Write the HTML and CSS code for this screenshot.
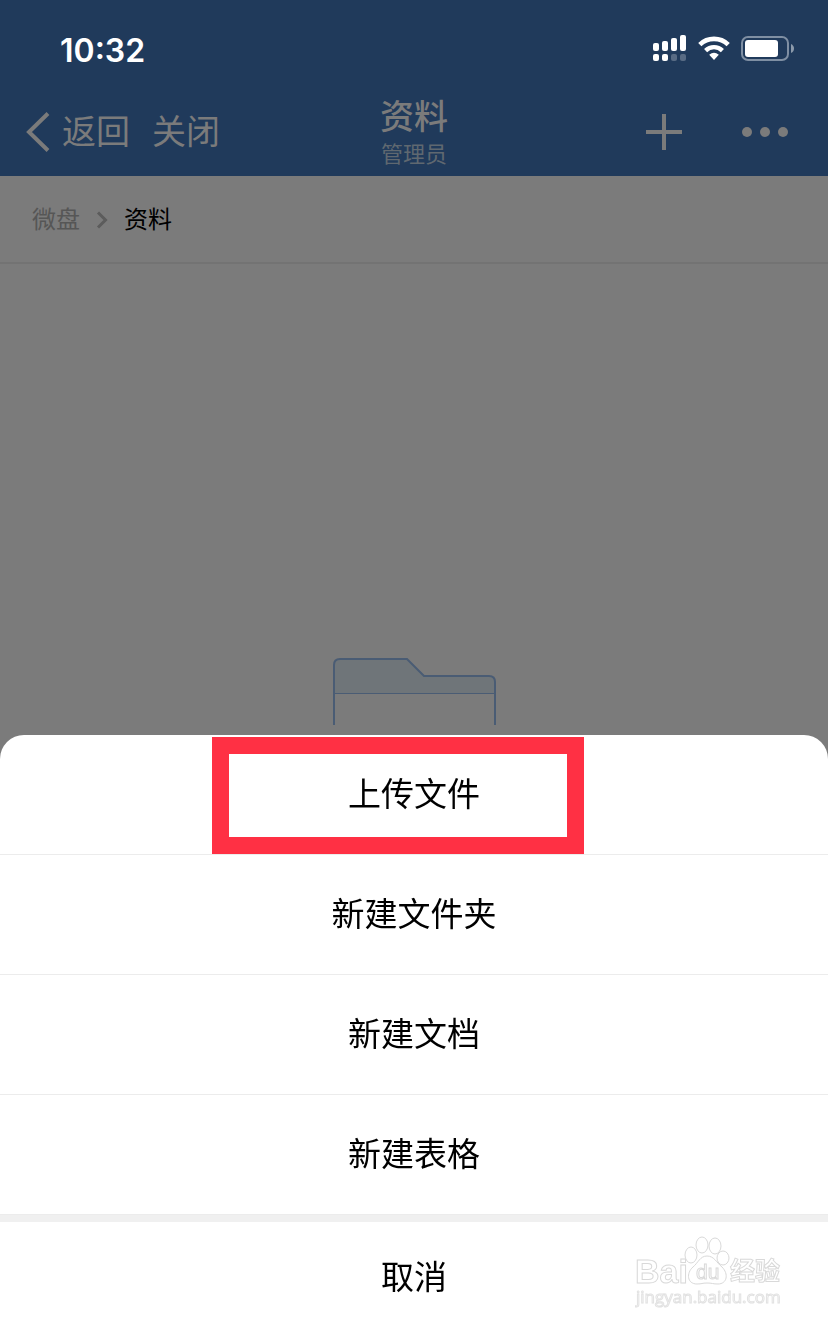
FILE: index.html
```html
<!DOCTYPE html>
<html lang="zh-CN">
  <head>
    <meta charset="utf-8">
    <meta name="viewport" content="width=device-width, initial-scale=1.0">
    <title>资料</title>
    <link rel="stylesheet" href="styles.css">
  </head>
  <body>
    <header class="header">
      <div class="status-bar">
        <span class="time">10:32</span>
        <div class="status-icons">
          <svg width="34" height="27" viewBox="0 0 34 27" fill="#fff">
            <rect x="0" y="8" width="6" height="8" rx="2"/>
            <rect x="9" y="6" width="6" height="10" rx="2"/>
            <rect x="18" y="3" width="6" height="13" rx="2"/>
            <rect x="27" y="0" width="6" height="16" rx="2"/>
            <rect x="0" y="19" width="6" height="7" rx="2"/>
            <rect x="9" y="19" width="6" height="7" rx="2"/>
            <rect x="18" y="19" width="6" height="7" rx="2" opacity="0.25"/>
            <rect x="27" y="19" width="6" height="7" rx="2" opacity="0.25"/>
          </svg>
          <svg width="32" height="24" viewBox="0 0 32 24">
            <path d="M1.8 8.6a20.4 20.4 0 0 1 28.4 0" fill="none" stroke="#fff" stroke-width="4.6"/>
            <path d="M7.6 14.6a12 12 0 0 1 16.8 0" fill="none" stroke="#fff" stroke-width="4.4"/>
            <path d="M11.2 18.7Q16 15 20.8 18.7L16 24Z" fill="#fff"/>
          </svg>
          <svg width="53" height="25" viewBox="0 0 53 25">
            <rect x="1" y="1" width="46" height="23" rx="6" fill="none" stroke="#7f8fa3" stroke-width="2"/>
            <rect x="4" y="4" width="33" height="17" rx="3" fill="#fff"/>
            <path d="M50 8q3 1.500 3 4.500t-3 4.500z" fill="#8c9aab"/>
          </svg>
        </div>
      </div>
      <nav class="nav-bar">
        <div class="nav-left">
          <button class="nav-button back-button">
            <svg width="24" height="40" viewBox="0 0 24 40" fill="none" stroke="#7b7b7b" stroke-width="4">
              <path d="M22 1.500 3 20l19 18.500"/>
            </svg>
            返回
          </button>
          <button class="nav-button">关闭</button>
        </div>
        <div class="nav-title">
          <h1>资料</h1>
          <p>管理员</p>
        </div>
        <div class="nav-right">
          <button class="nav-button" aria-label="添加">
            <svg width="36" height="36" viewBox="0 0 36 36" fill="#7b7b7b">
              <path d="M16 0h4v16h16v4H20v16h-4V20H0v-4h16z"/>
            </svg>
          </button>
          <button class="nav-button" aria-label="更多">
            <svg width="46" height="10" viewBox="0 0 46 10" fill="#7b7b7b">
              <circle cx="5" cy="5" r="5"/>
              <circle cx="23" cy="5" r="5"/>
              <circle cx="41" cy="5" r="5"/>
            </svg>
          </button>
        </div>
      </nav>
    </header>

    <div class="breadcrumb">
      <a href="#">微盘</a>
      <svg width="12" height="18" viewBox="0 0 12 18" fill="none" stroke="#5c5c5c" stroke-width="3">
        <path d="M2 1.500 9.500 9 2 16.500"/>
      </svg>
      <span>资料</span>
    </div>

    <main class="empty">
      <svg width="163" height="67" viewBox="0 0 163 67" fill="none" stroke="#4a5c74">
        <path d="M1 35V7q0-6 6-6h67l17 17h65q6 0 6 6v11z" fill="#6f7579" stroke="none"/>
        <path d="M1 35.500h161"/>
        <path d="M1 67V7q0-6 6-6h67l17 17h65q6 0 6 6v43" stroke-width="2"/>
      </svg>
    </main>

    <div class="sheet">
      <button class="sheet-item">上传文件<span class="highlight"></span></button>
      <button class="sheet-item">新建文件夹</button>
      <button class="sheet-item">新建文档</button>
      <button class="sheet-item">新建表格</button>
      <button class="sheet-item cancel">取消</button>
      <svg class="watermark" width="150" height="74" viewBox="0 0 150 74" fill="#fff" stroke="#d9d9d9">
        <text class="mark-name" x="0" y="47">Bai</text>
        <ellipse cx="56" cy="19" rx="6" ry="8"/>
        <ellipse cx="67" cy="9" rx="6" ry="8"/>
        <ellipse cx="80" cy="10" rx="6" ry="8"/>
        <ellipse cx="88" cy="22" rx="6" ry="7"/>
        <path d="M72 20c-7 0-9 7-14 11-7 6-6 17 4 17 5 0 5-1 10-1s6 1 11 1c9 0 11-10 4-17-6-5-8-11-15-11z"/>
        <text class="mark-du" x="61" y="43">du</text>
        <text class="mark-cn" x="95" y="44">经验</text>
        <text class="mark-url" x="1" y="67">jingyan.baidu.com</text>
      </svg>
    </div>
  </body>
</html>
```

FILE: styles.css
```css
* {
  box-sizing: border-box;
}

body {
  margin: 0;
  min-height: 100vh;
  background-color: #7b7b7b;
  color: #000;
  font-family: "Liberation Sans", "Noto Sans CJK SC", sans-serif;
}

h1, p {
  margin: 0;
}

svg {
  display: block;
}

button {
  margin: 0;
  padding: 0;
  border: 0;
  background: none;
  font-family: inherit;
  cursor: pointer;
}

.header {
  background-color: #203a5b;
  color: #7b7b7b;
}

.status-bar {
  display: flex;
  justify-content: space-between;
  align-items: center;
  height: 88px;
  padding: 12px 34px 0 60px;
}

.time {
  color: #fff;
  font-family: Inter, sans-serif;
  font-size: 32px;
  font-weight: 600;
}

.status-icons {
  display: flex;
  align-items: center;
  gap: 11px;
  padding-bottom: 4px;
}

.nav-bar {
  display: grid;
  grid-template-columns: 1fr auto 1fr;
  align-items: center;
  height: 88px;
}

.nav-left, .nav-right {
  display: flex;
  align-items: center;
}

.nav-left {
  gap: 22px;
  padding-left: 26px;
}

.nav-right {
  justify-content: flex-end;
  gap: 60px;
  padding-right: 40px;
}

.nav-button {
  color: #7b7b7b;
  font-size: 34px;
  line-height: 48px;
}

.back-button {
  display: flex;
  align-items: center;
  gap: 12px;
}

.nav-title {
  padding-top: 2px;
  text-align: center;
}

.nav-title h1 {
  font-size: 34px;
  font-weight: 500;
  line-height: 44px;
}

.nav-title p {
  color: #5f6870;
  font-size: 22px;
  line-height: 32px;
}

.breadcrumb {
  display: flex;
  align-items: center;
  gap: 16px;
  height: 88px;
  padding: 2px 32px 0;
  border-bottom: 2px solid #737373;
  font-size: 24px;
  line-height: 32px;
}

.breadcrumb a {
  color: #565656;
  text-decoration: none;
}

.empty {
  display: flex;
  justify-content: center;
  padding-top: 394px;
}

/* action sheet */
.sheet {
  position: fixed;
  right: 0;
  bottom: 0;
  left: 0;
  overflow: hidden;
  border-radius: 24px 24px 0 0;
  background-color: #fff;
}

.sheet-item {
  position: relative;
  display: block;
  width: 100%;
  height: 120px;
  border-bottom: 1px solid #ececec;
  color: #000;
  font-size: 33px;
  line-height: 48px;
}

.sheet-item.cancel {
  height: 110px;
  padding-top: 8px;
  border-top: 7px solid #f0f0f0;
  border-bottom: 0;
}

.highlight {
  position: absolute;
  top: 2px;
  left: calc(50% - 202px);
  width: 372px;
  height: 117px;
  border: 17px solid #ff3044;
}

.watermark {
  position: absolute;
  right: 43px;
  bottom: 15px;
  pointer-events: none;
}

.mark-name {
  font: bold 34px "Liberation Sans", sans-serif;
}

.mark-du {
  font: 21px "Liberation Sans", sans-serif;
}

.mark-cn {
  font: bold 25px "Noto Sans CJK SC", sans-serif;
}

.mark-url {
  font: 17px "Open Sans", sans-serif;
  stroke: #e2e2e2;
}
```
